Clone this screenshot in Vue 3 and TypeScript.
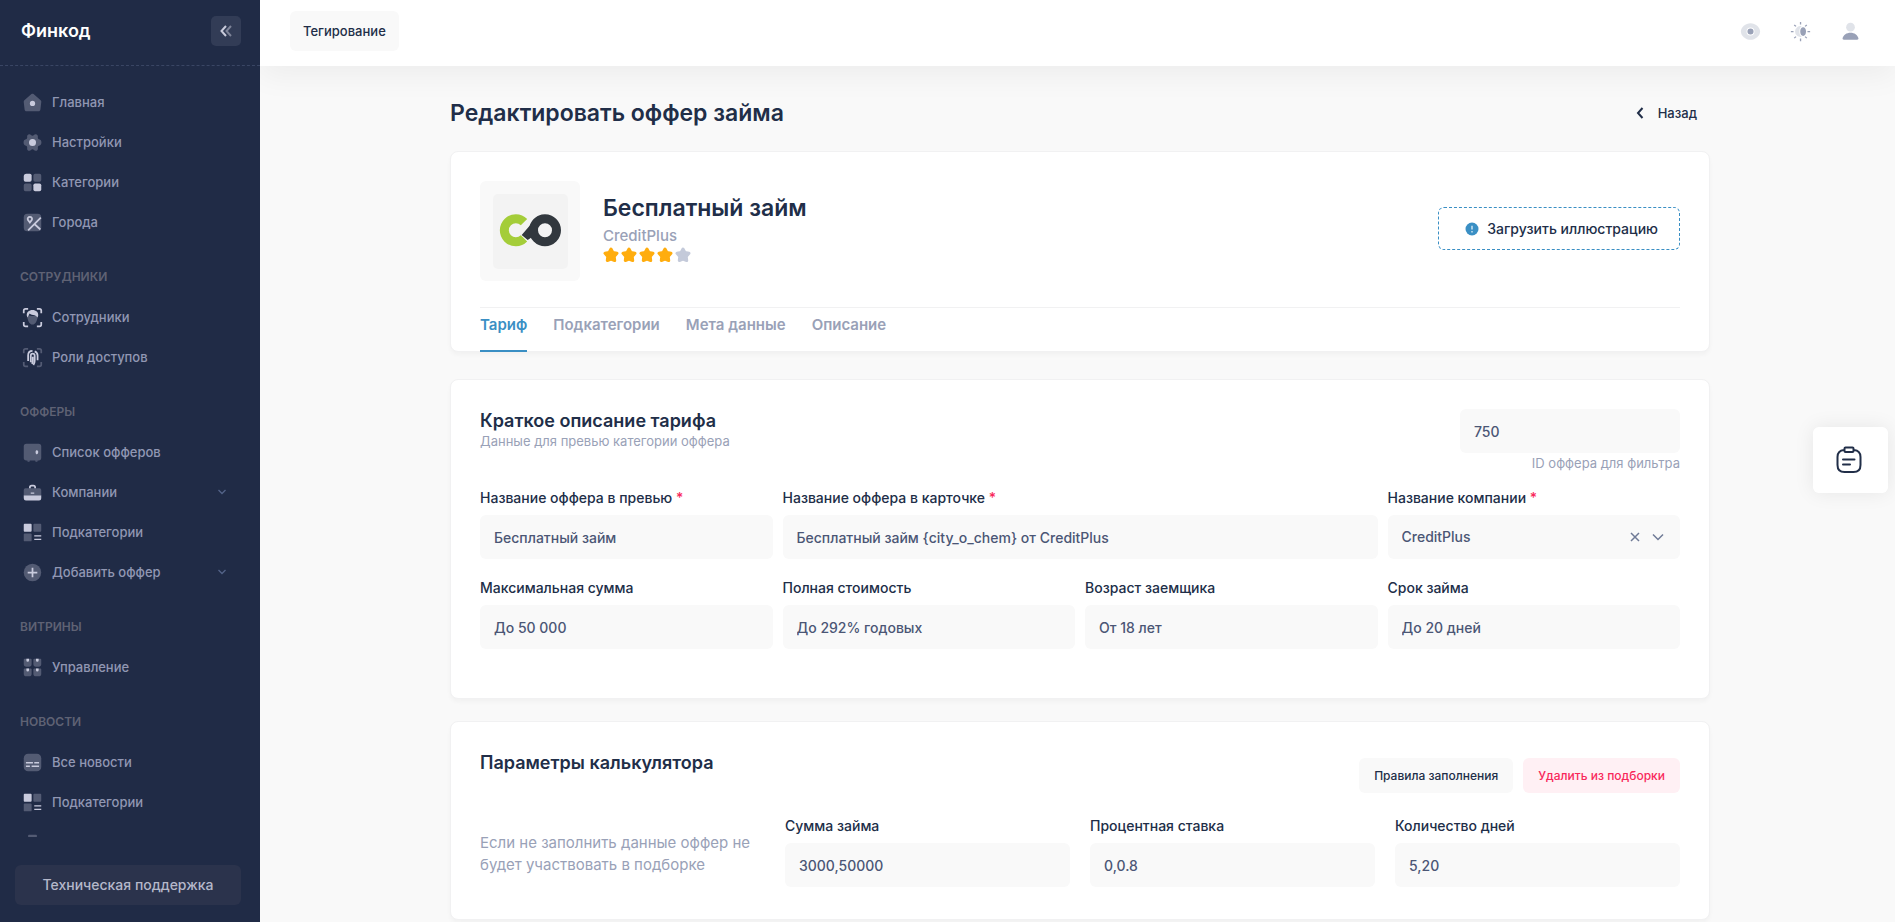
<script setup lang="ts">
import { ref } from 'vue'

interface Shape {
  d: string
  faint?: boolean
  line?: boolean
}
interface MenuItem {
  label: string
  icon: string
  expandable?: boolean
}
interface MenuGroup {
  title: string
  items: MenuItem[]
}
interface Field {
  id: string
  label: string
  value: string
  required?: boolean
  wide?: boolean
}

const icons: Record<string, Shape[]> = {
  home: [
    { faint: true, d: 'M21.900 10.200c.2.4.2.9.1 1.400l-1 8.600c-.1 1-1 1.800-2 1.800H5c-1 0-1.900-.8-2-1.800L2 11.600c0-.5 0-1 .1-1.400.2-.5.5-.8.9-1.100l7.800-6.700c.7-.5 1.700-.5 2.400 0L21 9.100c.4.3.7.6.9 1.100z' },
    { d: 'M12 10a3 3 0 1 1 0 6 3 3 0 0 1 0-6z' },
  ],
  gear: [
    { faint: true, d: 'M8.500 2.500c1.600 0 2 1.800 3.500 1.800s1.900-1.800 3.500-1.800c2 0 3 1.600 2.600 3.300-.2 1 .4 2.400 1.400 2.600 2 .4 2.700 1.800 2.700 3.600s-.7 3.200-2.700 3.600c-1 .2-1.600 1.600-1.400 2.600.4 1.700-.6 3.300-2.600 3.300-1.600 0-2-1.800-3.500-1.800s-1.900 1.800-3.500 1.800c-2 0-3-1.600-2.600-3.300.2-1-.4-2.400-1.400-2.600C2.500 15.200 1.800 13.800 1.800 12s.7-3.200 2.700-3.600c1-.2 1.600-1.600 1.400-2.600-.4-1.700.6-3.300 2.600-3.300z' },
    { d: 'M12 8a4 4 0 1 1 0 8 4 4 0 0 1 0-8z' },
  ],
  grid: [
    { d: 'M5 2h4a2 2 0 0 1 2 2v5a2 2 0 0 1-2 2H4a2 2 0 0 1-2-2V5a3 3 0 0 1 3-3z' },
    { faint: true, d: 'M15 2h5a2 2 0 0 1 2 2v5a2 2 0 0 1-2 2h-5a2 2 0 0 1-2-2V4a2 2 0 0 1 2-2zM4 13h5a2 2 0 0 1 2 2v5a2 2 0 0 1-2 2H4a2 2 0 0 1-2-2v-5a2 2 0 0 1 2-2z' },
    { d: 'M15 13h5a2 2 0 0 1 2 2v5a2 2 0 0 1-2 2h-5a2 2 0 0 1-2-2v-5a2 2 0 0 1 2-2z' },
  ],
  map: [
    { faint: true, d: 'M6 2h12a4 4 0 0 1 4 4v12a4 4 0 0 1-4 4H6a4 4 0 0 1-4-4V6a4 4 0 0 1 4-4z' },
    { line: true, d: 'M21.500 6.500L7 21M14.500 14L21 20M9 5.500a2.500 2.500 0 0 1 2.300 3.500L9 12 6.700 9A2.500 2.500 0 0 1 9 5.500z' },
  ],
  face: [
    { faint: true, d: 'M6 9c0 6 2.500 11 6 11s6-5 6-11c-3 2-9 1-12 0z' },
    { d: 'M5.500 10C5 6 8 3.500 12 3.500S19 6 18.500 10l-.8 2c-1-2-3-3-5-3-2 0-3-.5-4-1.500L6.300 12z' },
    { line: true, d: 'M2 7V4a2 2 0 0 1 2-2h3M17 2h3a2 2 0 0 1 2 2v3M22 17v3a2 2 0 0 1-2 2h-3M7 22H4a2 2 0 0 1-2-2v-3' },
  ],
  finger: [
    { line: true, faint: true, d: 'M2 7V4a2 2 0 0 1 2-2h3M17 2h3a2 2 0 0 1 2 2v3M22 17v3a2 2 0 0 1-2 2h-3M7 22H4a2 2 0 0 1-2-2v-3' },
    { line: true, d: 'M7 16V9.500C7 6.500 9 4.500 12 4.500M14.500 5c2 .8 3.300 2.500 3.300 4.800V15M10 17.500V10c0-1.500 1-2.300 2.200-2.300s2.300.8 2.300 2.300v6c0 2-.8 3.500-1.500 4.500M12.300 11v4.500c0 1.500-.4 2.800-.9 3.800' },
  ],
  safe: [
    { faint: true, d: 'M5 2h14a3 3 0 0 1 3 3v13a3 3 0 0 1-3 3H5a3 3 0 0 1-3-3V5a3 3 0 0 1 3-3z' },
    { d: 'M17 9.500c1 0 1.500.8 1.500 2S18 14 17 14c-.9 0-1.500-1-1.500-2.400S16.100 9.500 17 9.500z' },
    { faint: true, d: 'M6 21h3l-.5 1.500h-2zM15 21h3l-.5 1.500h-2z' },
  ],
  briefcase: [
    { faint: true, d: 'M4 7h16a2 2 0 0 1 2 2v7H2V9a2 2 0 0 1 2-2z' },
    { d: 'M2 15.500h20v3A2.500 2.500 0 0 1 19.500 21h-15A2.500 2.500 0 0 1 2 18.500zM10 12h4v1.500h-4zM8 7V6a3 3 0 0 1 3-3h2a3 3 0 0 1 3 3v1h-2V6a1 1 0 0 0-1-1h-2a1 1 0 0 0-1 1v1z' },
  ],
  category: [
    { d: 'M3 2h7a1 1 0 0 1 1 1v7a1 1 0 0 1-1 1H3a1 1 0 0 1-1-1V3a1 1 0 0 1 1-1zM14 15h8v1.700h-8zM14 19h8v1.700h-8z' },
    { faint: true, d: 'M14 2h7a1 1 0 0 1 1 1v7a1 1 0 0 1-1 1h-7a1 1 0 0 1-1-1V3a1 1 0 0 1 1-1zM3 13h7a1 1 0 0 1 1 1v7a1 1 0 0 1-1 1H3a1 1 0 0 1-1-1v-7a1 1 0 0 1 1-1z' },
  ],
  plus: [
    { faint: true, d: 'M12 2a10 10 0 1 1 0 20 10 10 0 0 1 0-20z' },
    { line: true, d: 'M12 6.500v11M6.500 12h11' },
  ],
  showcase: [
    { faint: true, d: 'M3 2h7a1 1 0 0 1 1 1v5a3 3 0 0 1-3 3H5a3 3 0 0 1-3-3V3a1 1 0 0 1 1-1zM14 2h7a1 1 0 0 1 1 1v5a3 3 0 0 1-3 3h-3a3 3 0 0 1-3-3V3a1 1 0 0 1 1-1zM3 13h7a1 1 0 0 1 1 1v5a3 3 0 0 1-3 3H5a3 3 0 0 1-3-3v-5a1 1 0 0 1 1-1zM14 13h7a1 1 0 0 1 1 1v5a3 3 0 0 1-3 3h-3a3 3 0 0 1-3-3v-5a1 1 0 0 1 1-1z' },
    { d: 'M5 2h3v2a1.500 1.500 0 0 1-3 0zM16 2h3v2a1.500 1.500 0 0 1-3 0zM5 13h3v2a1.500 1.500 0 0 1-3 0zM16 13h3v2a1.500 1.500 0 0 1-3 0z' },
  ],
  news: [
    { faint: true, d: 'M7 2h10a5 5 0 0 1 5 5v10a5 5 0 0 1-5 5H7a5 5 0 0 1-5-5V7a5 5 0 0 1 5-5z' },
    { d: 'M4.500 11.500h8V13h-8zM14 11.500h5.500V13H14zM4.500 15.500h4.500V17H4.500zM11 15.500h8.500V17H11z' },
  ],
  cap: [{ faint: true, d: 'M8 3h8a1 1 0 0 1 1 1v4H7V4a1 1 0 0 1 1-1z' }],
  eye: [
    { faint: true, d: 'M12 2.500c5.500 0 11 4.500 11 9.500s-5.500 9.500-11 9.500S1 17 1 12s5.500-9.500 11-9.500zm0 5a4.500 4.500 0 1 0 0 9 4.500 4.500 0 0 0 0-9z' },
    { d: 'M12 8.500a3.500 3.500 0 1 1 0 7 3.500 3.500 0 0 1 0-7z' },
  ],
  sun: [
    { faint: true, d: 'M13.500 6c-1.800 1-2.800 3.300-2.800 6s1 5 2.800 6A6.200 6.200 0 1 1 13.500 6z' },
    { d: 'M15 7c2 0 3.300 2 3.300 5s-1.300 5-3.300 5-3.300-2-3.300-5 1.300-5 3.300-5zM11.300 1h1.500v3h-1.500zM11.300 20h1.500v3h-1.500zM1 11.300h3v1.500H1zM20 11.300h3v1.500h-3zM4.300 5l1.100-1 2 1.700-1.100 1zM16.700 5.700l2-1.700 1 1-2 1.700zM4.300 19l2-1.700 1.100 1-2 1.700zM16.700 18.300l1-1 2 1.700-1 1z' },
  ],
  user: [
    { faint: true, d: 'M12 2a5 5 0 1 1 0 10 5 5 0 0 1 0-10z' },
    { d: 'M12 13.500c4.500 0 8 2.500 9 6 .3 1-.3 2-1.500 2h-15c-1.200 0-1.800-1-1.500-2 1-3.500 4.500-6 9-6z' },
  ],
}

const groups: MenuGroup[] = [
  {
    title: '',
    items: [
      { label: 'Главная', icon: 'home' },
      { label: 'Настройки', icon: 'gear' },
      { label: 'Категории', icon: 'grid' },
      { label: 'Города', icon: 'map' },
    ],
  },
  {
    title: 'Сотрудники',
    items: [
      { label: 'Сотрудники', icon: 'face' },
      { label: 'Роли доступов', icon: 'finger' },
    ],
  },
  {
    title: 'Офферы',
    items: [
      { label: 'Список офферов', icon: 'safe' },
      { label: 'Компании', icon: 'briefcase', expandable: true },
      { label: 'Подкатегории', icon: 'category' },
      { label: 'Добавить оффер', icon: 'plus', expandable: true },
    ],
  },
  { title: 'Витрины', items: [{ label: 'Управление', icon: 'showcase' }] },
  {
    title: 'Новости',
    items: [
      { label: 'Все новости', icon: 'news' },
      { label: 'Подкатегории', icon: 'category' },
      { label: '', icon: 'cap' },
    ],
  },
]

const tools = [
  { icon: 'eye', name: 'Просмотр' },
  { icon: 'sun', name: 'Тема' },
  { icon: 'user', name: 'Профиль' },
]

const tabs = ['Тариф', 'Подкатегории', 'Мета данные', 'Описание']
const activeTab = ref('Тариф')

const offerId = ref('750')
const company = ref('CreditPlus')
const names = ref<Field[]>([
  { id: 'preview', label: 'Название оффера в превью', value: 'Бесплатный займ', required: true },
  { id: 'card', label: 'Название оффера в карточке', value: 'Бесплатный займ {city_o_chem} от CreditPlus', required: true, wide: true },
])
const terms = ref<Field[]>([
  { id: 'amount', label: 'Максимальная сумма', value: 'До 50 000' },
  { id: 'cost', label: 'Полная стоимость', value: 'До 292% годовых' },
  { id: 'age', label: 'Возраст заемщика', value: 'От 18 лет' },
  { id: 'term', label: 'Срок займа', value: 'До 20 дней' },
])
const calc = ref<Field[]>([
  { id: 'calc-sum', label: 'Сумма займа', value: '3000,50000' },
  { id: 'calc-rate', label: 'Процентная ставка', value: '0,0.8' },
  { id: 'calc-days', label: 'Количество дней', value: '5,20' },
])
</script>

<template>
  <div class="shell">
    <aside class="sidebar">
      <div class="brand">
        <a href="#" class="brand-name">Финкод</a>
        <button type="button" class="collapse" aria-label="Свернуть меню">
          <svg width="12" height="12" viewBox="0 0 12 12"><path d="M6 1L1.500 6 6 11" /><path class="dim" d="M11 1L6.500 6l4.500 5" /></svg>
        </button>
      </div>
      <nav class="menu">
        <section v-for="group in groups" :key="group.title" class="group">
          <h2 v-if="group.title" class="group-title">{{ group.title }}</h2>
          <a v-for="item in group.items" :key="item.label" href="#" class="item">
            <svg class="icon" viewBox="0 0 24 24">
              <path v-for="s in icons[item.icon]" :key="s.d" :d="s.d" :class="{ faint: s.faint, line: s.line }" />
            </svg>
            <span class="item-label">{{ item.label }}</span>
            <svg v-if="item.expandable" class="arrow" viewBox="0 0 10 6"><path d="M1.500 1L5 4.500 8.500 1" /></svg>
          </a>
        </section>
      </nav>
      <div class="support">
        <button type="button" class="support-btn">Техническая поддержка</button>
      </div>
    </aside>

    <div class="main">
      <header class="topbar">
        <button type="button" class="btn btn-tall">Тегирование</button>
        <div class="tools">
          <button v-for="tool in tools" :key="tool.icon" type="button" class="tool" :aria-label="tool.name">
            <svg viewBox="0 0 24 24">
              <path v-for="s in icons[tool.icon]" :key="s.d" :d="s.d" :class="{ faint: s.faint }" />
            </svg>
          </button>
        </div>
      </header>

      <main class="content">
        <div class="heading">
          <h1>Редактировать оффер займа</h1>
          <a href="#" class="back">
            <svg width="8" height="12" viewBox="0 0 8 12"><path d="M6.500 1L2 6l4.500 5" /></svg>
            Назад
          </a>
        </div>

        <section class="card overview">
          <div class="product">
            <div class="logo">
              <svg viewBox="0 0 75 75">
                <rect width="75" height="75" rx="5" fill="#f3f3f3" />
                <path d="M31 28.200A11.500 11.500 0 1 0 31 44.400" fill="none" stroke="#a4cd39" stroke-width="9" />
                <path d="M45 22L28.700 41l6 5 3.300-2.300 4 3.300L52 40z" fill="#32383e" />
                <circle cx="52" cy="36.300" r="11.500" fill="#f3f3f3" stroke="#32383e" stroke-width="9" />
              </svg>
            </div>
            <div class="info">
              <h2>Бесплатный займ</h2>
              <a href="#" class="vendor">CreditPlus</a>
              <div class="stars" role="img" aria-label="4 / 5">
                <svg v-for="n in 5" :key="n" viewBox="0 0 16 16" :class="{ off: n > 4 }">
                  <path d="M8 2l1.900 3.500 4.100.8-2.800 3.100.5 4.100L8 12l-3.700 1.500.5-4.100L2 6.300l4.100-.8z" />
                </svg>
              </div>
            </div>
            <button type="button" class="upload">
              <svg width="14" height="14" viewBox="0 0 14 14">
                <circle cx="7" cy="7" r="6.500" fill="#3a8fc4" />
                <path d="M7 3.800v3.700M7 9v1.400" stroke="#d5e8f4" stroke-width="1.400" />
              </svg>
              Загрузить иллюстрацию
            </button>
          </div>
          <nav class="tabs">
            <a v-for="tab in tabs" :key="tab" href="#" class="tab" :class="{ active: tab === activeTab }" @click.prevent="activeTab = tab">{{ tab }}</a>
          </nav>
        </section>

        <section class="card tariff">
          <div class="card-head">
            <div>
              <h3>Краткое описание тарифа</h3>
              <p class="note">Данные для превью категории оффера</p>
            </div>
            <div class="offer-id">
              <input id="offer-id" v-model="offerId" class="input" type="text" />
              <label for="offer-id" class="hint">ID оффера для фильтра</label>
            </div>
          </div>
          <div class="grid">
            <div v-for="f in names" :key="f.id" class="field" :class="{ wide: f.wide }">
              <label :for="f.id">{{ f.label }} <span class="req">*</span></label>
              <input :id="f.id" v-model="f.value" class="input" type="text" />
            </div>
            <div class="field">
              <label for="company">Название компании <span class="req">*</span></label>
              <div class="select">
                <select id="company" v-model="company" class="input">
                  <option>CreditPlus</option>
                </select>
                <button type="button" class="clear" aria-label="Очистить">
                  <svg width="10" height="10" viewBox="0 0 10 10"><path d="M1 1l8 8M9 1L1 9" /></svg>
                </button>
                <svg class="caret" width="12" height="8" viewBox="0 0 12 8"><path d="M1 1.500l5 5 5-5" /></svg>
              </div>
            </div>
            <div v-for="f in terms" :key="f.id" class="field">
              <label :for="f.id">{{ f.label }}</label>
              <input :id="f.id" v-model="f.value" class="input" type="text" />
            </div>
          </div>
        </section>

        <section class="card calculator">
          <div class="card-head">
            <h3>Параметры калькулятора</h3>
            <div class="actions">
              <button type="button" class="btn">Правила заполнения</button>
              <button type="button" class="btn btn-danger">Удалить из подборки</button>
            </div>
          </div>
          <div class="grid loose">
            <p class="warning">Если не заполнить данные оффер не будет участвовать в подборке</p>
            <div v-for="f in calc" :key="f.id" class="field">
              <label :for="f.id">{{ f.label }}</label>
              <input :id="f.id" v-model="f.value" class="input" type="text" />
            </div>
          </div>
        </section>
      </main>
    </div>

    <button type="button" class="notes" aria-label="Заметки">
      <svg width="28" height="28" viewBox="0 0 28 28">
        <path d="M9 4C4.500 4.500 2.500 6.500 2.500 11v8c0 5 2.500 7 7 7h9c4.500 0 7-2 7-7v-8c0-4.500-2-6.500-6.500-7M10.500 1.500h7a1 1 0 0 1 1 1v2.500a1 1 0 0 1-1 1h-7a1 1 0 0 1-1-1V2.500a1 1 0 0 1 1-1zM8 13.500h11.500M8 18.500h7" />
      </svg>
    </button>
  </div>
</template>

<style>
body {
  margin: 0;
  background: #f9f9f9;
}
</style>

<style scoped>
* {
  box-sizing: border-box;
}
.shell {
  display: flex;
  min-height: 100vh;
  font-family: Inter, "Noto Sans", sans-serif;
  font-size: 13px;
  font-weight: 500;
  line-height: 20px;
  color: #212e48;
}
h1, h2, h3, p {
  margin: 0;
}
h1, h2, h3 {
  font-weight: 600;
}
a {
  color: inherit;
  text-decoration: none;
}
button {
  border: 0;
  padding: 0;
  background: none;
  font: inherit;
  color: inherit;
  cursor: pointer;
}
path.faint {
  opacity: 0.3;
}

.sidebar {
  position: sticky;
  top: 0;
  flex: none;
  display: flex;
  flex-direction: column;
  width: 260px;
  height: 100vh;
  background: #202b46;
}
.brand {
  display: flex;
  align-items: center;
  justify-content: space-between;
  height: 66px;
  padding: 0 19px 4px 21px;
  border-bottom: 1px dashed #3a4664;
}
.brand-name {
  color: #fff;
  font-size: 18px;
  font-weight: 600;
}
.collapse {
  display: flex;
  align-items: center;
  justify-content: center;
  width: 30px;
  height: 30px;
  border-radius: 5px;
  background: #323c56;
}
.collapse path {
  fill: none;
  stroke: #c9cbdb;
  stroke-width: 2;
}
.collapse .dim {
  opacity: 0.5;
}
.menu {
  flex: 1;
  min-height: 0;
  margin-top: 16px;
  overflow: hidden;
}
.group + .group {
  padding-top: 15px;
}
.group-title {
  padding-left: 20px;
  line-height: 40px;
  font-size: 12px;
  font-weight: 600;
  text-transform: uppercase;
  color: #5f6274;
}
.item {
  display: flex;
  align-items: center;
  gap: 9px;
  height: 40px;
  padding: 0 33px 0 22px;
  color: #9197b3;
}
.item-label {
  flex: 1;
}
.icon {
  width: 21px;
  height: 21px;
}
.icon path {
  fill: #c9cbdd;
}
.icon path.line {
  fill: none;
  stroke: #c9cbdd;
  stroke-width: 2;
}
.arrow {
  width: 10px;
  height: 6px;
}
.arrow path {
  fill: none;
  stroke: #536388;
  stroke-width: 1.300;
}
.support {
  padding: 28px 19px 17px 15px;
}
.support-btn {
  width: 100%;
  height: 40px;
  border-radius: 6px;
  background: #2b334c;
  color: #b5b8ca;
  font-size: 14px;
}

.main {
  flex: 1;
  min-width: 0;
}
.topbar {
  display: flex;
  align-items: center;
  justify-content: space-between;
  height: 66px;
  padding: 0 30px 4px;
  background: #fff;
  box-shadow: 0 10px 30px rgba(0, 0, 0, 0.05);
}
.btn {
  height: 35px;
  padding: 0 15px;
  border-radius: 6px;
  background: #f9f9f9;
  font-size: 12px;
}
.btn-tall {
  height: 40px;
  padding: 0 13px;
  font-size: 13px;
}
.btn-danger {
  background: #fff0f4;
  color: #f8285a;
}
.tools {
  display: flex;
  gap: 10px;
}
.tool {
  display: flex;
  align-items: center;
  justify-content: center;
  width: 40px;
  height: 40px;
}
.tool:last-child {
  margin-right: -5px;
}
.tool svg {
  width: 21px;
  height: 21px;
}
.tool path {
  fill: #99a1b7;
}

.content {
  max-width: 1295px;
  margin: 0 auto;
  padding: 28px 15px 0 20px;
}
.heading {
  display: flex;
  align-items: center;
  justify-content: space-between;
  margin-bottom: 19px;
}
h1 {
  font-size: 23px;
  line-height: 38px;
}
.back {
  display: flex;
  align-items: center;
  gap: 14px;
  padding-right: 13px;
}
.back path {
  fill: none;
  stroke: #212e48;
  stroke-width: 2;
}
.card {
  padding: 29px;
  border: 1px solid #f1f1f2;
  border-radius: 8px;
  background: #fff;
  box-shadow: 0 3px 4px rgba(0, 0, 0, 0.03);
}
.overview {
  padding-bottom: 0;
  margin-bottom: 27px;
}
.product {
  display: flex;
  align-items: flex-start;
  gap: 23px;
  padding-bottom: 26px;
  border-bottom: 1px solid #f1f1f2;
}
.logo {
  display: flex;
  align-items: center;
  justify-content: center;
  width: 100px;
  height: 100px;
  border-radius: 6px;
  background: #f9f9f9;
}
.logo svg {
  width: 75px;
  height: 75px;
}
.info {
  display: flex;
  flex-direction: column;
  padding-top: 12px;
}
.info h2 {
  font-size: 23px;
  line-height: 30px;
}
.vendor {
  margin-top: 3px;
  font-size: 15px;
  color: #99a1b7;
}
.stars {
  display: flex;
  gap: 2px;
  margin-top: 1px;
}
.stars svg {
  width: 16px;
  height: 16px;
}
.stars path {
  fill: #ffad0f;
  stroke: #ffad0f;
  stroke-width: 3;
  stroke-linejoin: round;
}
.stars .off path {
  fill: #c4cada;
  stroke: #c4cada;
}
.upload {
  display: flex;
  align-items: center;
  gap: 8px;
  height: 43px;
  margin: 26px 0 0 auto;
  padding: 0 21px 0 26px;
  border: 1px dashed #3a8fc4;
  border-radius: 6px;
  font-size: 14px;
}
.tabs {
  display: flex;
  gap: 26px;
  margin-bottom: -1px;
}
.tab {
  padding: 7px 0 15px;
  border-bottom: 2px solid transparent;
  font-size: 15px;
  font-weight: 600;
  color: #99a1b7;
}
.tab.active {
  color: #3a8fc4;
  border-color: #3a8fc4;
}
.card-head {
  display: flex;
  justify-content: space-between;
  margin-bottom: 15px;
}
h3 {
  font-size: 18px;
  line-height: 24px;
}
.note {
  line-height: 16px;
  font-weight: 400;
  color: #99a1b7;
}
.offer-id {
  width: 220px;
}
.hint {
  display: block;
  text-align: right;
  font-weight: 400;
  color: #99a1b7;
}
.input {
  display: block;
  width: 100%;
  height: 44px;
  margin: 0;
  padding: 0 14px;
  border: 0;
  border-radius: 6px;
  outline: 0;
  background: #f9f9f9;
  font: inherit;
  font-size: 14px;
  color: #4b5675;
}
.grid {
  display: grid;
  grid-template-columns: repeat(4, minmax(0, 1fr));
  gap: 19px 10px;
}
.wide {
  grid-column: span 2;
}
.field label {
  display: block;
  margin-bottom: 7px;
  font-size: 14px;
}
.req {
  color: #f8285a;
}
.select {
  position: relative;
}
.select .input {
  appearance: none;
}
.clear {
  position: absolute;
  top: 12px;
  right: 35px;
  display: flex;
  align-items: center;
  justify-content: center;
  width: 20px;
  height: 20px;
}
.caret {
  position: absolute;
  top: 18px;
  right: 16px;
  pointer-events: none;
}
.clear path,
.caret path {
  fill: none;
  stroke: #6f7a96;
  stroke-width: 1.500;
}
.tariff {
  padding-bottom: 49px;
  margin-bottom: 22px;
}
.calculator {
  padding-bottom: 32px;
}
.calculator .card-head {
  margin-bottom: 23px;
}
.actions {
  display: flex;
  gap: 10px;
  padding-top: 7px;
}
.loose {
  column-gap: 20px;
}
.warning {
  padding-top: 16px;
  font-size: 15px;
  font-weight: 400;
  line-height: 22px;
  color: #99a1b7;
}

.notes {
  position: fixed;
  top: 427px;
  right: 7px;
  display: flex;
  align-items: center;
  justify-content: center;
  width: 75px;
  height: 66px;
  padding-right: 4px;
  border-radius: 6px;
  background: #fff;
  box-shadow: 0 0 20px rgba(0, 0, 0, 0.08);
}
.notes path {
  fill: none;
  stroke: #212e48;
  stroke-width: 2;
  stroke-linecap: round;
}
</style>
